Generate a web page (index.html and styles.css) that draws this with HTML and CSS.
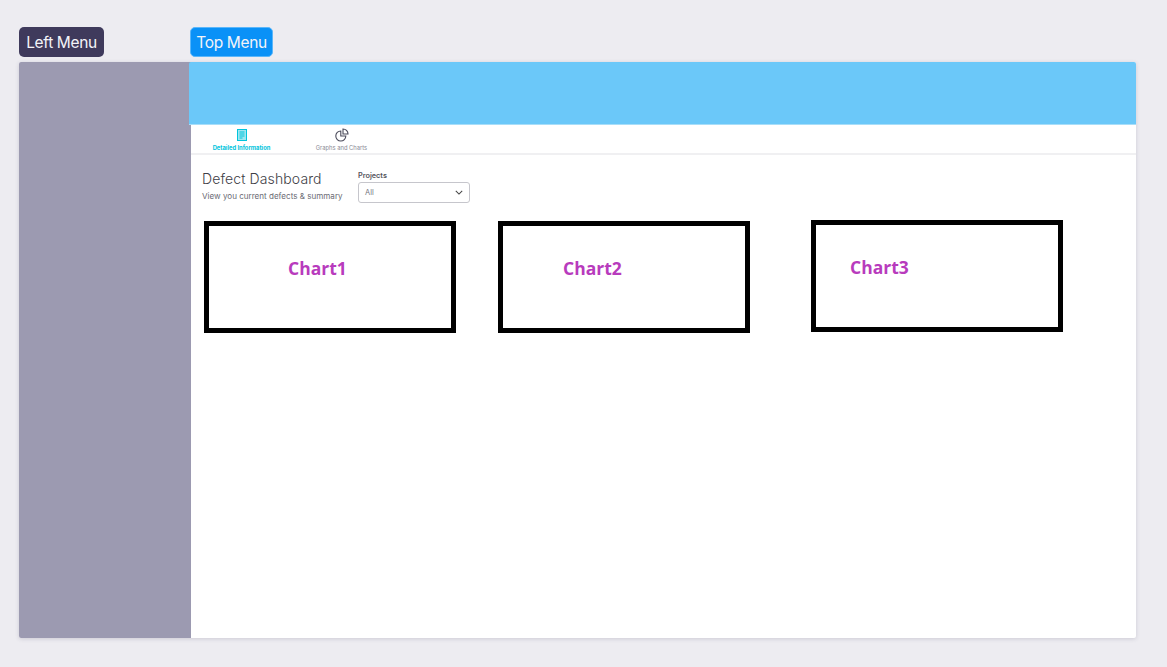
FILE: index.html
```html
<!DOCTYPE html>
<html lang="en">
<head>
<meta charset="utf-8">
<title>Defect Dashboard</title>
<link rel="stylesheet" href="styles.css">
</head>
<body>
<div class="labels">
  <span class="label label-left">Left Menu</span>
  <span class="label label-top">Top Menu</span>
</div>
<div class="frame">
  <aside class="sidebar"></aside>
  <main class="content">
    <div class="banner"></div>
    <nav class="tabs">
      <div class="tab tab-active">
        <svg class="tab-icon" viewBox="0 0 12 12" width="12" height="12" fill="none" stroke="#00c4dc" stroke-width="1"><rect x="1.5" y="0.5" width="9" height="11" fill="#9fe6f0"/><path d="M3.5 3h5M3.5 5h5M3.5 7h5M3.5 9h3" stroke="#00c4dc"/></svg>
        <span>Detailed Information</span>
      </div>
      <div class="tab">
        <svg class="tab-icon" viewBox="0 0 14 14" width="14" height="14" fill="none" stroke="#4a4a5a" stroke-width="1.1"><path d="M5.8 3A5 5 0 1 0 10.8 8H5.8Z"/><path d="M8 1A5 5 0 0 1 13 6H8Z"/></svg>
        <span>Graphs and Charts</span>
      </div>
    </nav>
    <section class="head">
      <div class="title-block">
        <h1 class="title">Defect Dashboard</h1>
        <p class="subtitle">View you current defects &amp; summary</p>
      </div>
      <div class="filter">
        <div class="filter-label">Projects</div>
        <div class="select">
          <span>All</span>
          <svg viewBox="0 0 10 6" width="8" height="5" fill="none" stroke="#444" stroke-width="1.3"><path d="M1 1l4 4 4-4"/></svg>
        </div>
      </div>
    </section>
    <section class="charts">
      <div class="chart chart-one"><span class="chart-name">Chart1</span></div>
      <div class="chart chart-two"><span class="chart-name">Chart2</span></div>
      <div class="chart chart-three"><span class="chart-name">Chart3</span></div>
    </section>
  </main>
</div>
</body>
</html>
```
FILE: styles.css
```css
* { box-sizing: border-box; }
html, body { margin: 0; height: 100%; }
body {
  background: #edecf1;
  padding: 27px 31px 0 19px;
  font-family: Inter, "Liberation Sans", sans-serif;
  overflow: hidden;
}
.labels { display: flex; height: 30px; margin-bottom: 5px; }
.label {
  display: flex;
  align-items: center;
  justify-content: center;
  height: 30px;
  border-radius: 5px;
  color: #f4f4f8;
  font-size: 15.5px;
  letter-spacing: -0.35px;
}
.label-left { width: 85px; background: #3f3a5c; margin-right: 86px; }
.label-top { width: 83px; background: #0a91f7; border: 1px solid #5ab6fa; }
.frame {
  display: flex;
  height: 576px;
  background: #fff;
  box-shadow: 0 1px 4px rgba(60, 55, 90, 0.18);
  border-radius: 2px;
}
.sidebar { width: 172px; background: #9c9ab1; border-radius: 2px 0 0 2px; }
.content { flex: 1; min-width: 0; }
.banner {
  height: 63px;
  margin-left: -2px;
  background: #6bc8f9;
  border-bottom: 1px solid #a8def9;
  border-radius: 2px 2px 0 0;
}
.tabs {
  display: flex;
  height: 30px;
  padding: 3px 0 0 21px;
  border-bottom: 2px solid #f0f0f2;
}
.tab {
  display: flex;
  flex-direction: column;
  align-items: center;
  width: 59px;
  margin-right: 41px;
  color: #8b8b96;
  font-size: 5.8px;
  white-space: nowrap;
}
.tab-icon { height: 14px; margin-bottom: 2px; }
.tab-active { color: #00c4dc; font-weight: 700; }
.head { display: flex; padding: 15px 0 0 11px; }
.title-block { width: 156px; }
.title { margin: 0; font-size: 14px; font-weight: 300; line-height: 18px; color: #3e3e46; letter-spacing: 0.12px; }
.subtitle { margin: 3px 0 0; font-size: 8.07px; line-height: 11px; color: #6b6b74; white-space: nowrap; }
.filter { margin-top: 1px; }
.filter-label { font-size: 7.3px; font-weight: 600; line-height: 10px; color: #55555d; margin-bottom: 1px; }
.select {
  display: flex;
  align-items: center;
  justify-content: space-between;
  width: 112px;
  height: 21px;
  padding: 0 6px;
  border: 1px solid #c6c6cc;
  border-radius: 3px;
  font-size: 7.5px;
  color: #77777f;
}
.charts { display: flex; align-items: flex-start; padding: 18px 0 0 13px; }
.chart {
  width: 252px;
  height: 112px;
  border: 5px solid #000;
  flex: none;
  padding: 30px 0 0 79px;
}
.chart-two { margin-left: 42px; padding-left: 60px; }
.chart-three { margin: -1px 0 0 61px; padding-left: 34px; }
.chart-name {
  font-family: "Open Sans", "Liberation Sans", sans-serif;
  font-weight: 700;
  font-size: 17.5px;
  line-height: 24px;
  color: #b83bbd;
  display: block;
}
```
